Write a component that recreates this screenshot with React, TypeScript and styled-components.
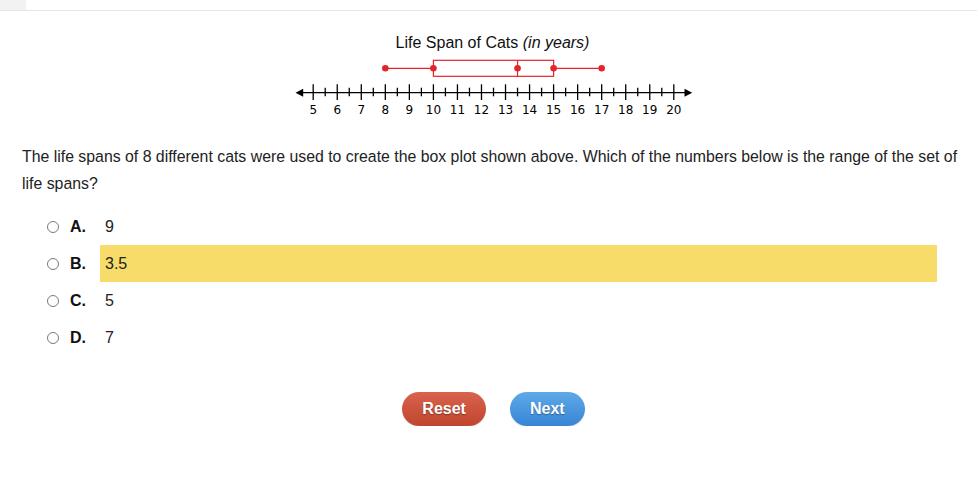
import React from "react";
import styled, { createGlobalStyle } from "styled-components";

const GlobalStyle = createGlobalStyle`
  html, body {
    margin: 0;
    padding: 0;
    background: #fff;
  }
  body {
    font-family: "Liberation Sans", Arial, sans-serif;
    color: #222;
  }
`;

// box plot numbers (years)
const plot = { min: 8, q1: 10, median: 13.5, q3: 15, max: 17 };
const axisFrom = 5;
const axisTo = 20;
const unit = 24.04;
const x0 = 24.2;
const sx = (v: number) => x0 + (v - axisFrom) * unit;

const choices = [
    { letter: "A.", value: "9" },
    { letter: "B.", value: "3.5", selected: true },
    { letter: "C.", value: "5" },
    { letter: "D.", value: "7" },
];

export default function App() {
    const ticks: number[] = [];
    for (let v = axisFrom; v <= axisTo; v += 0.5) ticks.push(v);

    return (
        <>
            <GlobalStyle />
            <TopBar>
                <Tab />
            </TopBar>
            <Page>
                <Chart>
                    <ChartTitle>
                        Life Span of Cats <em>(in years)</em>
                    </ChartTitle>
                    <Plot width={410} height={68} viewBox="0 0 410 68">
                        {/* whiskers */}
                        <line x1={sx(plot.min)} x2={sx(plot.q1)} y1={16.3} y2={16.3} stroke="#e5232b" strokeWidth={1.2} />
                        <line x1={sx(plot.q3)} x2={sx(plot.max)} y1={16.3} y2={16.3} stroke="#e5232b" strokeWidth={1.2} />
                        <rect
                            x={sx(plot.q1)}
                            y={8.3}
                            width={sx(plot.q3) - sx(plot.q1)}
                            height={16}
                            fill="none"
                            stroke="#e5232b"
                            strokeWidth={1.2}
                        />
                        <line x1={sx(plot.median)} x2={sx(plot.median)} y1={8.3} y2={24.3} stroke="#e5232b" strokeWidth={1.2} />
                        {[plot.min, plot.q1, plot.median, plot.q3, plot.max].map((v) => (
                            <circle key={v} cx={sx(v)} cy={16.3} r={3.3} fill="#e5232b" />
                        ))}

                        {/* number line */}
                        <line x1={10} x2={400} y1={40.7} y2={40.7} stroke="#000" strokeWidth={1.3} />
                        <polygon points="6.5,40.7 14.2,36.7 14.2,44.7" fill="#000" />
                        <polygon points="403.2,40.7 395.5,36.7 395.5,44.7" fill="#000" />
                        {ticks.map((v) => {
                            const major = Number.isInteger(v);
                            return (
                                <line
                                    key={v}
                                    x1={sx(v)}
                                    x2={sx(v)}
                                    y1={major ? 32.3 : 35.7}
                                    y2={major ? 48 : 44.3}
                                    stroke="#000"
                                    strokeWidth={1.3}
                                />
                            );
                        })}
                        {ticks
                            .filter((v) => Number.isInteger(v))
                            .map((v) => (
                                <AxisLabel key={v} x={sx(v)} y={62.3} textAnchor="middle">
                                    {v}
                                </AxisLabel>
                            ))}
                    </Plot>
                </Chart>

                <Question>
                    The life spans of 8 different cats were used to create the box plot shown above. Which of the
                    numbers below is the range of the set of life spans?
                </Question>

                <OptionList>
                    {choices.map((c) => (
                        <OptionRow key={c.letter}>
                            <Radio />
                            <Letter>{c.letter}</Letter>
                            <Value $selected={!!c.selected}>{c.value}</Value>
                        </OptionRow>
                    ))}
                </OptionList>

                <ButtonBar>
                    <ActionButton $tone="reset">Reset</ActionButton>
                    <ActionButton $tone="next">Next</ActionButton>
                </ButtonBar>
            </Page>
        </>
    );
}

const TopBar = styled.div`
    height: 10px;
    border-bottom: 1px solid #e6e6e6;
    display: flex;
`;

const Tab = styled.div`
    width: 26px;
    background: #f2f2f2;
`;

const Page = styled.main`
    padding: 0 12px 0 22px;
`;

const Chart = styled.figure`
    margin: 23px auto 0;
    width: 410px;
    display: flex;
    flex-direction: column;
    align-items: center;
`;

const ChartTitle = styled.div`
    font-size: 16px;
    line-height: 18px;
    color: #111;
    margin-left: -2px;

    em {
        font-style: italic;
    }
`;

const Plot = styled.svg`
    display: block;
`;

const AxisLabel = styled.text`
    font-family: "DejaVu Sans", Verdana, sans-serif;
    font-size: 12px;
    fill: #000;
`;

const Question = styled.p`
    margin: 23px 0 0;
    font-size: 15.85px;
    line-height: 27px;
    color: #222;
`;

const OptionList = styled.div`
    margin: 11px 28px 0 0;
    display: flex;
    flex-direction: column;
`;

const OptionRow = styled.div`
    display: flex;
    align-items: stretch;
    height: 37px;
    padding-left: 25px;
`;

const Radio = styled.span`
    align-self: center;
    width: 12px;
    height: 12px;
    box-sizing: border-box;
    border: 1px solid #7a7a7a;
    border-radius: 50%;
    background: #fff;
    margin-right: 11px;
`;

const Letter = styled.span`
    width: 30px;
    display: flex;
    align-items: center;
    font-size: 16px;
    font-weight: bold;
    color: #111;
`;

const Value = styled.span<{ $selected: boolean }>`
    flex: 1;
    display: flex;
    align-items: center;
    padding-left: 5px;
    font-size: 16px;
    color: #222;
    background: ${(p) => (p.$selected ? "#f7dc6a" : "transparent")};
`;

const ButtonBar = styled.div`
    margin-top: 36px;
    display: flex;
    justify-content: center;
    gap: 24px;
`;

const ActionButton = styled.button<{ $tone: "reset" | "next" }>`
    height: 34px;
    padding: 0 20px;
    border: none;
    border-radius: 17px;
    font-family: "Liberation Sans", Arial, sans-serif;
    font-size: 16px;
    font-weight: bold;
    color: #fff;
    text-shadow: 0 1px 1px rgba(0, 0, 0, 0.35);
    cursor: pointer;
    background: ${(p) =>
        p.$tone === "reset"
            ? "linear-gradient(#d9634d, #bf452e)"
            : "linear-gradient(#5eaae8, #3784d6)"};
    box-shadow: 0 1px 1px rgba(0, 0, 0, 0.15);
`;
